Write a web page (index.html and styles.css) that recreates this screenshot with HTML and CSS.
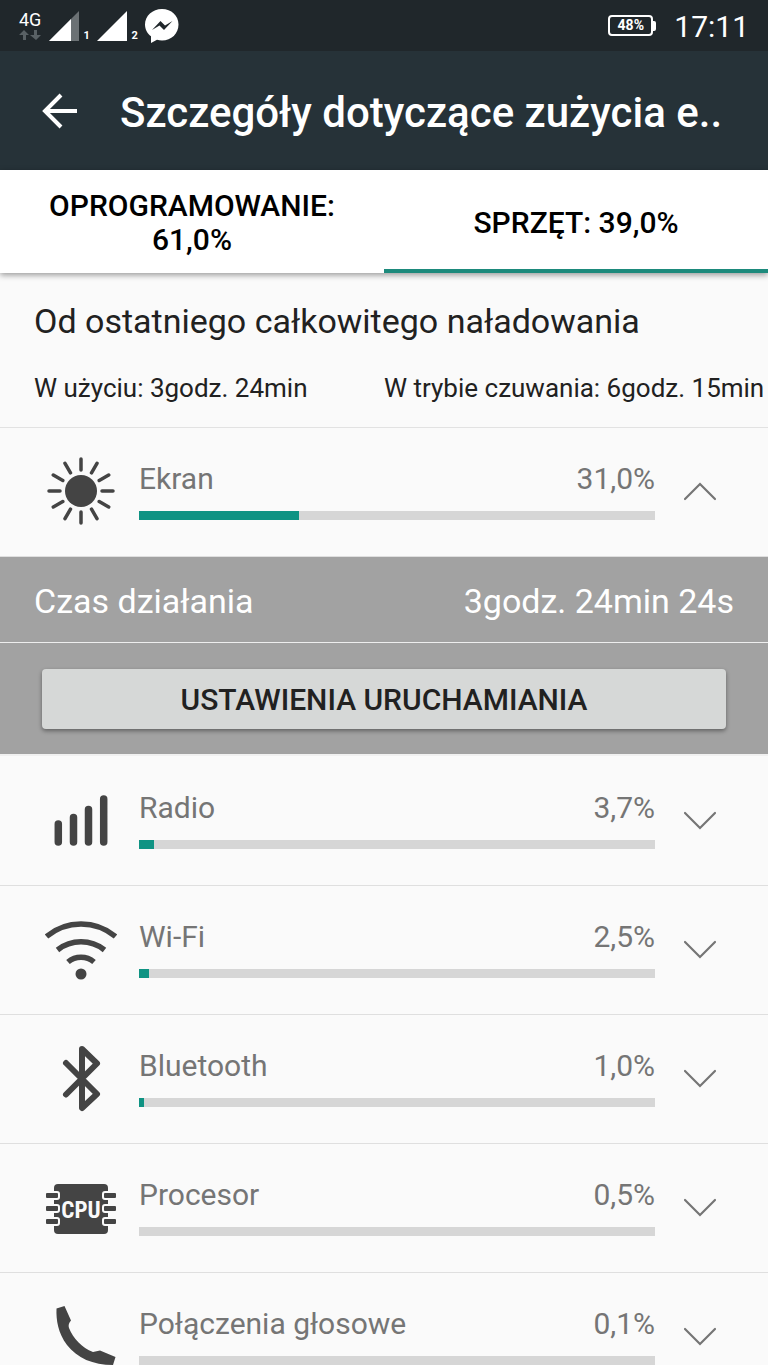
FILE: index.html
```html
<!DOCTYPE html>
<html lang="pl">
<head>
<meta charset="utf-8">
<meta name="viewport" content="width=device-width, initial-scale=1">
<title>Szczegóły dotyczące zużycia energii</title>
<link rel="stylesheet" href="styles.css">
</head>
<body>
<div class="screen">
  <div class="status">
    <div class="status-group">
      <div class="network">
        <span class="network-type">4G</span>
        <svg class="network-arrows" viewBox="0 0 22 10"><path d="M5 0 10 5H7v5H4V5H0zM17 10l5-5h-4V0h-3v5h-4z" fill="#596165"/></svg>
      </div>
      <svg class="signal" viewBox="0 0 30 30"><path d="M30 0V30H0z" fill="#6b7174"/><path d="M22 8V30H0z" fill="#fff"/></svg>
      <span class="sim">1</span>
      <svg class="signal" viewBox="0 0 30 30"><path d="M30 0V30H0z" fill="#fff"/></svg>
      <span class="sim">2</span>
      <svg class="messenger" viewBox="0 0 34 34"><path d="M17 0C7.500 0 0 7 0 15.500c0 5 2.400 9 6 11.800V34l6-3.200c1.600.4 3.300.7 5 .7 9.400 0 16.500-7 16.500-16S26.400 0 17 0z" fill="#fff"/><path d="M7 21l8.500-9 4.500 4.500 7.500-4.500-8.500 9-4.500-4.500z" fill="#20272b"/></svg>
    </div>
    <div class="status-group">
      <div class="battery"><span class="battery-level">48%</span></div>
      <span class="clock">17:11</span>
    </div>
  </div>

  <header class="appbar">
    <button class="back" type="button" aria-label="Wstecz">
      <svg class="back-icon" viewBox="0 0 36 36"><path d="M35 18H4M19 2 3 18l16 16" fill="none" stroke="#fff" stroke-width="4"/></svg>
    </button>
    <h1 class="title">Szczegóły dotyczące zużycia e..</h1>
  </header>

  <nav class="tabs" role="tablist">
    <button class="tab" type="button" role="tab" aria-selected="false">OPROGRAMOWANIE: 61,0%</button>
    <button class="tab tab-active" type="button" role="tab" aria-selected="true">SPRZĘT: 39,0%</button>
  </nav>

  <main class="content">
    <section class="summary">
      <h2 class="summary-title">Od ostatniego całkowitego naładowania</h2>
      <div class="summary-times">
        <span>W użyciu: 3godz. 24min</span>
        <span>W trybie czuwania: 6godz. 15min</span>
      </div>
    </section>

    <article class="row">
      <svg class="row-icon" viewBox="0 0 72 72">
        <circle cx="36" cy="35" r="16" fill="#444"/>
        <path d="M36 14V3M36 56V67M15 35H4M57 35H68M46.500 16.800 52 7.300M25.500 16.800 20 7.300M46.500 53.200 52 62.700M25.500 53.200 20 62.700M54.200 24.500 63.700 19M17.800 24.500 8.300 19M54.200 45.500 63.700 51M17.800 45.500 8.300 51" stroke="#444" stroke-width="3.500" stroke-linecap="round"/>
      </svg>
      <div class="usage">
        <div class="usage-text"><span>Ekran</span><span>31,0%</span></div>
        <div class="track"><div class="fill" style="width:31%"></div></div>
      </div>
      <button class="toggle" type="button" aria-label="Zwiń Ekran" aria-expanded="true"><svg class="chevron" viewBox="0 0 34 20"><path d="M2 18 17 3l15 15" fill="none" stroke="#757575" stroke-width="2.200" stroke-linecap="round"/></svg></button>
    </article>

    <section class="detail">
      <div class="detail-line"><span>Czas działania</span><span>3godz. 24min 24s</span></div>
      <div class="detail-action"><button class="launch" type="button">USTAWIENIA URUCHAMIANIA</button></div>
    </section>

    <article class="row">
      <svg class="row-icon" viewBox="0 1 72 72"><path d="M13.300 40V58M28.500 33.500V58M43.500 25.500V58M58.700 15V58" stroke="#444" stroke-width="7.500" stroke-linecap="round"/></svg>
      <div class="usage">
        <div class="usage-text"><span>Radio</span><span>3,7%</span></div>
        <div class="track"><div class="fill" style="width:3%"></div></div>
      </div>
      <button class="toggle" type="button" aria-label="Rozwiń Radio" aria-expanded="false"><svg class="chevron" viewBox="0 0 34 20"><path d="M2 3l15 15L32 3" fill="none" stroke="#757575" stroke-width="2.200" stroke-linecap="round"/></svg></button>
    </article>

    <article class="row">
      <svg class="row-icon" viewBox="0 1 72 72">
        <path d="M1.500 23.500A54 54 0 0 1 70.500 23.500M12.500 37A38 38 0 0 1 59.500 37M23 49A20 20 0 0 1 49 49" fill="none" stroke="#444" stroke-width="5.500"/>
        <circle cx="36" cy="61" r="5.500" fill="#444"/>
      </svg>
      <div class="usage">
        <div class="usage-text"><span>Wi-Fi</span><span>2,5%</span></div>
        <div class="track"><div class="fill" style="width:2%"></div></div>
      </div>
      <button class="toggle" type="button" aria-label="Rozwiń Wi-Fi" aria-expanded="false"><svg class="chevron" viewBox="0 0 34 20"><path d="M2 3l15 15L32 3" fill="none" stroke="#757575" stroke-width="2.200" stroke-linecap="round"/></svg></button>
    </article>

    <article class="row">
      <svg class="row-icon" viewBox="0 1 72 72"><path d="M21 21 52 52 37 66V7L52 21.500 21 52.500" fill="none" stroke="#444" stroke-width="6" stroke-linecap="round" stroke-linejoin="round"/></svg>
      <div class="usage">
        <div class="usage-text"><span>Bluetooth</span><span>1,0%</span></div>
        <div class="track"><div class="fill" style="width:1%"></div></div>
      </div>
      <button class="toggle" type="button" aria-label="Rozwiń Bluetooth" aria-expanded="false"><svg class="chevron" viewBox="0 0 34 20"><path d="M2 3l15 15L32 3" fill="none" stroke="#757575" stroke-width="2.200" stroke-linecap="round"/></svg></button>
    </article>

    <article class="row">
      <svg class="row-icon" viewBox="0 1 72 72">
        <rect x="9" y="13" width="54" height="50" rx="4" fill="#444"/>
        <g fill="#444" stroke="#fafafa" stroke-width="2">
          <rect x="0" y="21" width="14" height="7" rx="2"/><rect x="0" y="34" width="14" height="7" rx="2"/><rect x="0" y="47" width="14" height="7" rx="2"/>
          <rect x="58" y="21" width="14" height="7" rx="2"/><rect x="58" y="34" width="14" height="7" rx="2"/><rect x="58" y="47" width="14" height="7" rx="2"/>
        </g>
        <text class="cpu-label" x="36" y="47" text-anchor="middle">CPU</text>
      </svg>
      <div class="usage">
        <div class="usage-text"><span>Procesor</span><span>0,5%</span></div>
        <div class="track"></div>
      </div>
      <button class="toggle" type="button" aria-label="Rozwiń Procesor" aria-expanded="false"><svg class="chevron" viewBox="0 0 34 20"><path d="M2 3l15 15L32 3" fill="none" stroke="#757575" stroke-width="2.200" stroke-linecap="round"/></svg></button>
    </article>

    <article class="row">
      <svg class="row-icon" viewBox="0 1 72 72"><path d="M11.500 8.500 19.500 6 26 20.500C24 23 23 25 24 28 28 38 37 48 48 52L55 50.500 70.500 57 68 65C48 65 32 58 22 45 13 33 11 20 11.500 8.500z" fill="#444"/></svg>
      <div class="usage">
        <div class="usage-text"><span>Połączenia głosowe</span><span>0,1%</span></div>
        <div class="track"></div>
      </div>
      <button class="toggle" type="button" aria-label="Rozwiń Połączenia głosowe" aria-expanded="false"><svg class="chevron" viewBox="0 0 34 20"><path d="M2 3l15 15L32 3" fill="none" stroke="#757575" stroke-width="2.200" stroke-linecap="round"/></svg></button>
    </article>
  </main>
</div>
</body>
</html>
```
FILE: styles.css
```css
* { box-sizing: border-box; }
body { margin: 0; background: #fafafa; font-family: Roboto, "Noto Sans", sans-serif; color: #212121; }
button { font: inherit; color: inherit; border: 0; padding: 0; background: none; cursor: pointer; }
svg { display: block; flex: none; }
h1, h2 { margin: 0; font-weight: 400; }

.screen { display: flex; flex-direction: column; height: 100vh; }

.status { flex: none; display: flex; justify-content: space-between; height: 51px; padding: 0 19px; background: #20272b; color: #fff; }
.status-group { display: flex; align-items: center; }
.network { display: flex; flex-direction: column; align-items: center; gap: 1px; margin-right: 8px; }
.network-type { font: 400 18px/18px Roboto, sans-serif; }
.network-arrows { width: 22px; height: 10px; }
.signal { width: 30px; height: 30px; }
.sim { align-self: flex-end; width: 18px; padding: 0 0 10px 4px; font-size: 11px; line-height: 10px; font-weight: 700; }
.messenger { width: 34px; height: 34px; }
.battery { display: flex; align-items: center; margin-right: 18px; }
.battery::after { content: ""; width: 3px; height: 10px; border-radius: 0 2px 2px 0; background: #fff; }
.battery-level { width: 45px; border: 2px solid #fff; border-radius: 4px; font-size: 14px; line-height: 17px; font-weight: 700; text-align: center; }
.clock { padding-top: 2px; font-size: 30px; line-height: 36px; }

.appbar { flex: none; display: flex; align-items: center; height: 119px; padding: 0 32px 0 42px; background: #263238; color: #fff; }
.back { flex: none; width: 78px; }
.back-icon { width: 36px; height: 36px; }
.title { padding-top: 4px; font-size: 42px; line-height: 50px; font-weight: 500; white-space: nowrap; overflow: hidden; }

.tabs { position: relative; flex: none; display: flex; height: 103px; background: #fff; box-shadow: 0 2px 6px rgba(0, 0, 0, 0.4); }
.tab { flex: 1; padding: 6px 40px 0; border-bottom: 4px solid transparent; font-size: 30px; line-height: 34px; font-weight: 500; color: #000; }
.tab-active { border-color: #1d8a7c; }

.content { flex: 1; min-height: 0; overflow-y: auto; scrollbar-width: none; }
.summary { padding: 28px 0 23px 34px; border-bottom: 1px solid #e2e2e2; }
.summary-title { font-size: 34px; line-height: 40px; }
.summary-times { display: grid; grid-template-columns: 350px 1fr; margin-top: 32px; font-size: 26px; line-height: 31px; white-space: nowrap; }

.row { display: flex; align-items: flex-start; height: 129px; padding: 28px 50px 0 45px; border-bottom: 1px solid #dfdfdf; color: #757575; }
.row-icon { width: 72px; height: 72px; margin-right: 22px; }
.usage { flex: 1; padding-top: 5px; }
.usage-text { display: flex; justify-content: space-between; margin-bottom: 14px; font-size: 30px; line-height: 36px; }
.track { height: 9px; background: #d6d6d6; }
.fill { height: 100%; background: #0f9383; }
.toggle { flex: none; width: 63px; height: 70px; display: flex; align-items: center; justify-content: flex-end; padding-right: 1px; }
.chevron { width: 34px; height: 20px; }
.cpu-label { font-family: "Roboto Condensed", "Liberation Sans Narrow", Roboto, sans-serif; font-size: 23px; font-weight: 700; fill: #fafafa; }

.detail { margin-bottom: 1px; background: #a2a2a2; color: #fff; border-bottom: 2px solid #f0f0f0; }
.detail-line { display: flex; justify-content: space-between; padding: 24px 34px 21px; border-bottom: 1px solid #eee; font-size: 34px; line-height: 40px; }
.detail-action { padding: 26px 42px 25px; }
.launch { display: block; width: 100%; height: 60px; border-radius: 4px; background: #d6d8d7; color: #212121; font-size: 30px; font-weight: 500; box-shadow: 0 2px 4px rgba(0, 0, 0, 0.4); }
```
